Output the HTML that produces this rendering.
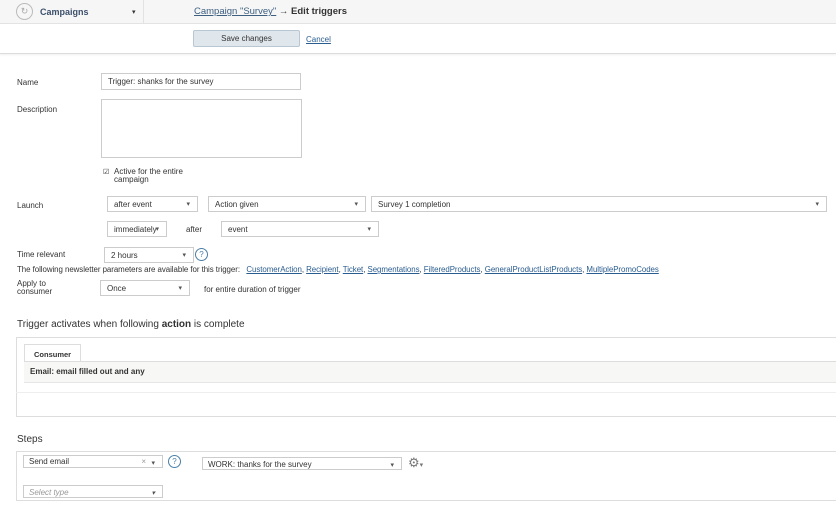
<!DOCTYPE html>
<html><head><meta charset="utf-8"><style>
*{box-sizing:border-box;margin:0;padding:0}
body{width:836px;height:511px;overflow:hidden;background:#fff;font-family:"Liberation Sans",sans-serif;font-size:8px;color:#333;position:relative}
.a{position:absolute}
.box{position:absolute;border:1px solid #ccc;background:#fff;height:16px;padding:3px 6px;font-size:8px;color:#333}
.dd:after{content:"▾";position:absolute;right:7px;top:3px;font-size:7px;color:#555}
.lnk{color:#2a5d8f;text-decoration:underline}
.q{position:absolute;width:13px;height:13px;border:1px solid #4a7fa8;border-radius:50%;color:#4a7fa8;font-size:8px;text-align:center;line-height:11px}
</style></head><body>
<div class="a" style="left:0;top:0;width:836px;height:24px;background:#f6f6f6;border-bottom:1px solid #e2e2e2"></div>
<div class="a" style="left:143px;top:0;width:1px;height:24px;background:#e2e2e2"></div>
<div class="a" style="left:16px;top:3px;width:17px;height:17px;border:1px solid #bbb;border-radius:50%;color:#aaa;font-size:9px;text-align:center;line-height:15px">↻</div>
<div class="a" style="left:40px;top:7px;font-weight:bold;color:#3b4f6b;font-size:9px">Campaigns</div>
<div class="a" style="left:132px;top:8px;font-size:7px">▾</div>
<div class="a" style="left:194px;top:6px;font-size:9.5px"><span class="lnk" style="color:#3d5f80">Campaign "Survey"</span> → <b style="color:#333">Edit triggers</b></div>
<div class="a" style="left:0;top:24px;width:836px;height:30px;background:#fff;border-bottom:1px solid #ddd;box-shadow:0 1px 2px #eee"></div>
<div class="a" style="left:193px;top:30px;width:107px;height:17px;background:#dfe6ec;border:1px solid #b9c7d3;border-radius:2px;text-align:center;line-height:15px;font-size:8px;color:#333">Save changes</div>
<div class="a lnk" style="left:306px;top:35px">Cancel</div>

<div class="a" style="left:17px;top:78px">Name</div>
<div class="box" style="left:101px;top:73px;width:200px;height:17px">Trigger: shanks for the survey</div>
<div class="a" style="left:17px;top:105px">Description</div>
<div class="box" style="left:101px;top:99px;width:201px;height:59px"></div>
<div class="a" style="left:103px;top:168px;font-size:7px">☑</div>
<div class="a" style="left:114px;top:168px;line-height:8px">Active for the entire<br>campaign</div>

<div class="a" style="left:17px;top:201px">Launch</div>
<div class="box dd" style="left:107px;top:196px;width:91px">after event</div>
<div class="box dd" style="left:208px;top:196px;width:158px">Action given</div>
<div class="box dd" style="left:371px;top:196px;width:456px">Survey 1 completion</div>
<div class="box dd" style="left:107px;top:221px;width:60px;padding-right:0">immediately</div>
<div class="a" style="left:186px;top:225px">after</div>
<div class="box dd" style="left:221px;top:221px;width:158px">event</div>
<div class="a" style="left:17px;top:250px">Time relevant</div>
<div class="box dd" style="left:104px;top:247px;width:90px">2 hours</div>
<div class="q" style="left:195px;top:248px">?</div>
<div class="a" style="left:17px;top:265px;font-size:7.9px;letter-spacing:-0.05px">The following newsletter parameters are available for this trigger: &nbsp; <span class="lnk">CustomerAction</span>, <span class="lnk">Recipient</span>, <span class="lnk">Ticket</span>, <span class="lnk">Segmentations</span>, <span class="lnk">FilteredProducts</span>, <span class="lnk">GeneralProductListProducts</span>, <span class="lnk">MultiplePromoCodes</span></div>
<div class="a" style="left:17px;top:280px;line-height:8px">Apply to<br>consumer</div>
<div class="box dd" style="left:100px;top:280px;width:90px">Once</div>
<div class="a" style="left:204px;top:285px">for entire duration of trigger</div>

<div class="a" style="left:17px;top:319px;font-size:10px">Trigger activates when following <b>action</b> is complete</div>
<div class="a" style="left:16px;top:337px;width:830px;height:80px;border:1px solid #ddd"></div>
<div class="a" style="left:24px;top:344px;width:57px;height:17px;border:1px solid #ddd;border-bottom:none;background:#fff;padding:5px 9px;font-weight:bold;font-size:7.5px">Consumer</div>
<div class="a" style="left:24px;top:361px;width:820px;height:22px;background:#f7f7f5;border-top:1px solid #ddd;border-bottom:1px solid #e6e6e6;padding:5px 18px 5px 18px;font-weight:bold;font-size:8px"><span style="margin-left:-12px;position:relative;left:0">Email: email filled out and any</span></div>
<div class="a" style="left:16px;top:392px;width:830px;height:1px;background:#eee"></div>

<div class="a" style="left:17px;top:434px;font-size:10px">Steps</div>
<div class="a" style="left:16px;top:451px;width:830px;height:50px;border:1px solid #ddd"></div>
<div class="box dd" style="left:23px;top:455px;width:140px;height:13px;padding:1px 5px">Send email<span style="position:absolute;right:16px;color:#999">×</span></div>
<div class="q" style="left:168px;top:455px">?</div>
<div class="box dd" style="left:202px;top:457px;width:200px;height:13px;padding:2px 5px">WORK: thanks for the survey</div>
<div class="a" style="left:408px;top:455px;font-size:13px;color:#777">⚙<span style="font-size:7px">▾</span></div>
<div class="box dd" style="left:23px;top:485px;width:140px;height:13px;padding:2px 5px;color:#999;font-style:italic">Select type</div>
</body></html>
